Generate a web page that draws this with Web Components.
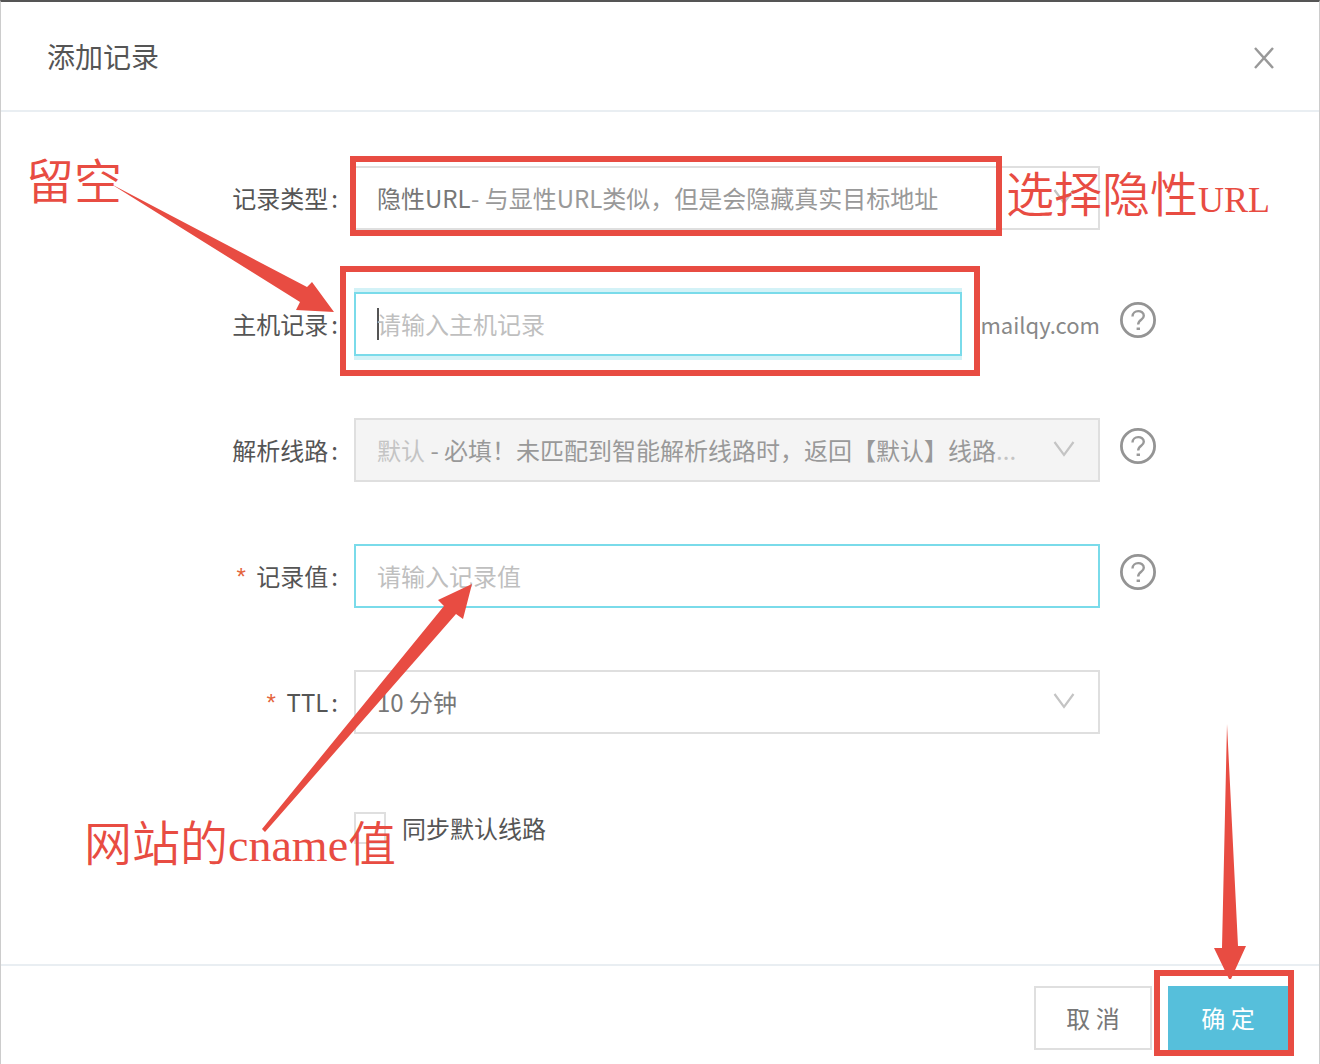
<!DOCTYPE html>
<html lang="zh-CN">
<head>
<meta charset="utf-8">
<title>添加记录</title>
<style>
  body { margin: 0; background: #fff; font: 24px/32px "Noto Sans CJK SC", sans-serif; color: #555; }
</style>
</head>
<body>
<record-dialog heading="添加记录">
  <select-field label="记录类型" value="隐性URL" hint="- 与显性URL类似，但是会隐藏真实目标地址">
    <mark-frame slot="mark" style="inset: -12px 96px -8px -6px"></mark-frame>
  </select-field>
  <text-field label="主机记录" placeholder="请输入主机记录" suffix="mailqy.com" active help>
    <mark-frame slot="mark" style="inset: -28px -20px -22px -16px"></mark-frame>
  </text-field>
  <select-field label="解析线路" value="默认" hint="- 必填！未匹配到智能解析线路时，返回【默认】线路" more="..." disabled help></select-field>
  <text-field label="记录值" placeholder="请输入记录值" required help></text-field>
  <select-field label="TTL" value="10 分钟" required></select-field>
  <check-field label="同步默认线路"></check-field>
  <action-button slot="actions">取 消</action-button>
  <action-button slot="actions" primary>确 定
    <mark-frame slot="mark" style="inset: -16px -6px -6px -14px"></mark-frame>
  </action-button>
  <mark-arrows slot="notes"></mark-arrows>
  <mark-note slot="notes" style="left: 25px; top: 157px">留空</mark-note>
  <mark-note slot="notes" style="left: 1005px; top: 170px">选择隐性<span style="font-size: 36px">URL</span></mark-note>
  <mark-note slot="notes" style="left: 83px; top: 819px">网站的<span style="font-size: 46px">cname</span>值</mark-note>
</record-dialog>

<script>
const chevron = '<svg class="chevron" width="24" height="24" viewBox="0 0 24 24" aria-hidden="true"><path d="M2.5 4 12 17 21.500 4" fill="none" stroke="#c4c4c4" stroke-width="2.200"/></svg>';
const helpIcon = '<button class="help" type="button" aria-label="帮助"><svg width="36" height="36" viewBox="0 0 36 36" aria-hidden="true"><circle cx="18" cy="18" r="16.600" fill="none" stroke="#949494" stroke-width="2.800"/><path d="M12.500 14.500C12.500 7.500 23.800 7.500 23.800 13.800C23.800 18 18.200 17.500 18.200 22.500" fill="none" stroke="#999" stroke-width="2.400"/><path d="M16.600 25.500h3.400v2.500h-3.400z" fill="#999"/></svg></button>';

class Base extends HTMLElement {
  connectedCallback() {
    if (this.shadowRoot) return;
    this.attachShadow({ mode: 'open' }).innerHTML = '<style>' + this.css() + '</style>' + this.html();
  }
  attr(name) { return this.getAttribute(name) || ''; }
}

customElements.define('record-dialog', class extends Base {
  css() { return `
    :host { display: flex; flex-direction: column; position: relative; box-sizing: border-box; min-height: 100vh;
      overflow: hidden; border: 1px solid #ccc; border-top: 2px solid #555; border-bottom: 0; background: #fff; }
    header { display: flex; align-items: center; justify-content: space-between; padding: 34px 44px 34px 46px;
      border-bottom: 2px solid #e9eef2; }
    h1 { margin: 0; font-size: 28px; line-height: 40px; font-weight: 400; }
    button { display: flex; padding: 4px 0 0; border: 0; background: none; }
    main { display: flex; flex-direction: column; gap: 62px; padding: 54px 0; flex: 1; }
    footer { display: flex; justify-content: flex-end; gap: 16px; padding: 20px 31px 14px; border-top: 2px solid #e9eef2; }
  `; }
  html() { return `
    <header><h1>${this.attr('heading')}</h1>
      <button type="button" aria-label="关闭"><svg width="22" height="22" viewBox="0 0 22 22"><path d="M2 1 20 21M20 1 2 21" stroke="#999" stroke-width="2.400"/></svg></button>
    </header>
    <main><slot></slot></main>
    <footer><slot name="actions"></slot></footer>
    <slot name="notes"></slot>`; }
});

class FieldRow extends Base {
  css() { return `
    :host { display: grid; grid-template-columns: 337px minmax(0, 1fr) 36px; align-items: center; padding-right: 163px; }
    label { display: flex; justify-content: flex-end; }
    .colon { margin-left: 3px; }
    .star { color: #e4643c; font-family: "Liberation Mono", monospace; line-height: 24px; padding-top: 8px; margin-right: 8px; }
    .field { display: flex; align-items: center; margin: 0 20px 0 16px; }
    .box { display: flex; align-items: center; flex: 1; min-width: 0; box-sizing: border-box; height: 64px;
      position: relative; border: 2px solid #dfdfdf; padding: 0 22px 0 21px; }
    .help { display: flex; padding: 0 0 8px; border: 0; background: none; }
    input, select { font: inherit; color: inherit; border: 0; padding: 0; margin: 0; outline: 0; background: none; appearance: none; }
  `; }
  html() { return `
    <label for="control">${this.hasAttribute('required') ? '<span class="star">*</span>' : ''}${this.attr('label')}<span class="colon">:</span></label>
    <div class="field">${this.control()}</div>
    ${this.hasAttribute('help') ? helpIcon : ''}`; }
}

customElements.define('text-field', class extends FieldRow {
  css() { return super.css() + `
    .box { border-color: #7adbea; }
    :host([active]) .box { box-shadow: 0 4px 0 #d3f2f7, 0 -4px 0 #d3f2f7; }
    input { flex: 1; min-width: 0; height: 32px; }
    input::placeholder { color: #bfbfbf; opacity: 1; }
    .caret { width: 2px; height: 32px; margin-right: -2px; background: #555; }
    .suffix { flex: 0 0 122px; margin-left: 16px; color: #888; font-size: 22px; text-align: right; }
  `; }
  control() { return `
    <div class="box">${this.hasAttribute('active') ? '<span class="caret"></span>' : ''}<input id="control" type="text" placeholder="${this.attr('placeholder')}"><slot name="mark"></slot></div>
    ${this.attr('suffix') ? `<span class="suffix">${this.attr('suffix')}</span>` : ''}`; }
});

customElements.define('select-field', class extends FieldRow {
  css() { return super.css() + `
    :host([disabled]) .box { background: #f4f4f4; }
    select { color: #777; flex: none; opacity: 1; }
    select:disabled { color: #c4c4c4; }
    .hint { flex: 1; white-space: pre; color: #999; }
    .more { color: #c4c4c4; }
    .chevron { flex: none; }
  `; }
  control() {
    const off = this.hasAttribute('disabled');
    return `<div class="box"><select id="control" ${off ? 'disabled' : ''}><option>${this.attr('value')}</option></select>
      <span class="hint">${off ? ' ' : ''}${this.attr('hint')}<span class="more">${this.attr('more')}</span></span>${chevron}<slot name="mark"></slot></div>`;
  }
});

customElements.define('check-field', class extends Base {
  css() { return `
    :host { display: flex; align-items: center; height: 64px; padding-left: 353px; }
    label { display: flex; align-items: center; gap: 16px; }
    input { appearance: none; box-sizing: border-box; width: 32px; height: 32px; margin: 0; border: 2px solid #dfdfdf; background: #fff; }
    input:checked { background: #56bfdb; }
  `; }
  html() { return `<label><input type="checkbox">${this.attr('label')}</label>`; }
});

customElements.define('action-button', class extends Base {
  css() { return `
    :host { display: block; position: relative; }
    button { display: block; box-sizing: border-box; min-width: 118px; height: 64px; padding: 0 24px;
      border: 2px solid #dfdfdf; background: #fff; color: #777; font: inherit; }
    :host([primary]) button { min-width: 120px; border-color: #56bfdb; background: #56bfdb; color: #fff; }
  `; }
  html() { return '<button type="button"><slot></slot></button><slot name="mark"></slot>'; }
});

customElements.define('mark-frame', class extends Base {
  css() { return ':host { display: block; position: absolute; z-index: 1; border: 6px solid #e84c42; pointer-events: none; }'; }
  html() { return ''; }
});

customElements.define('mark-note', class extends Base {
  css() { return ':host { display: block; position: absolute; z-index: 2; color: #e84c42; font: 350 48px/48px "Liberation Serif", "Noto Sans CJK SC", serif; white-space: nowrap; pointer-events: none; }'; }
  html() { return '<slot></slot>'; }
});

customElements.define('mark-arrows', class extends Base {
  css() { return `
    :host { display: block; position: absolute; z-index: 2; left: -1px; top: -2px; pointer-events: none; }
    svg { display: block; }`; }
  html() { return `<svg width="1320" height="1064" viewBox="0 0 1320 1064" fill="#e84c42" aria-hidden="true">
    <path d="M111 184 307 287 312 282 334 312 296 310 300 302Z"/>
    <path d="M262 829 444 606 438 600 472 584 463 619 456 614 265 832Z"/>
    <path d="M1227 724 1238 946 1246 946 1231 979 1229 979 1214 948 1222 948Z"/></svg>`; }
});
</script>
</body>
</html>
